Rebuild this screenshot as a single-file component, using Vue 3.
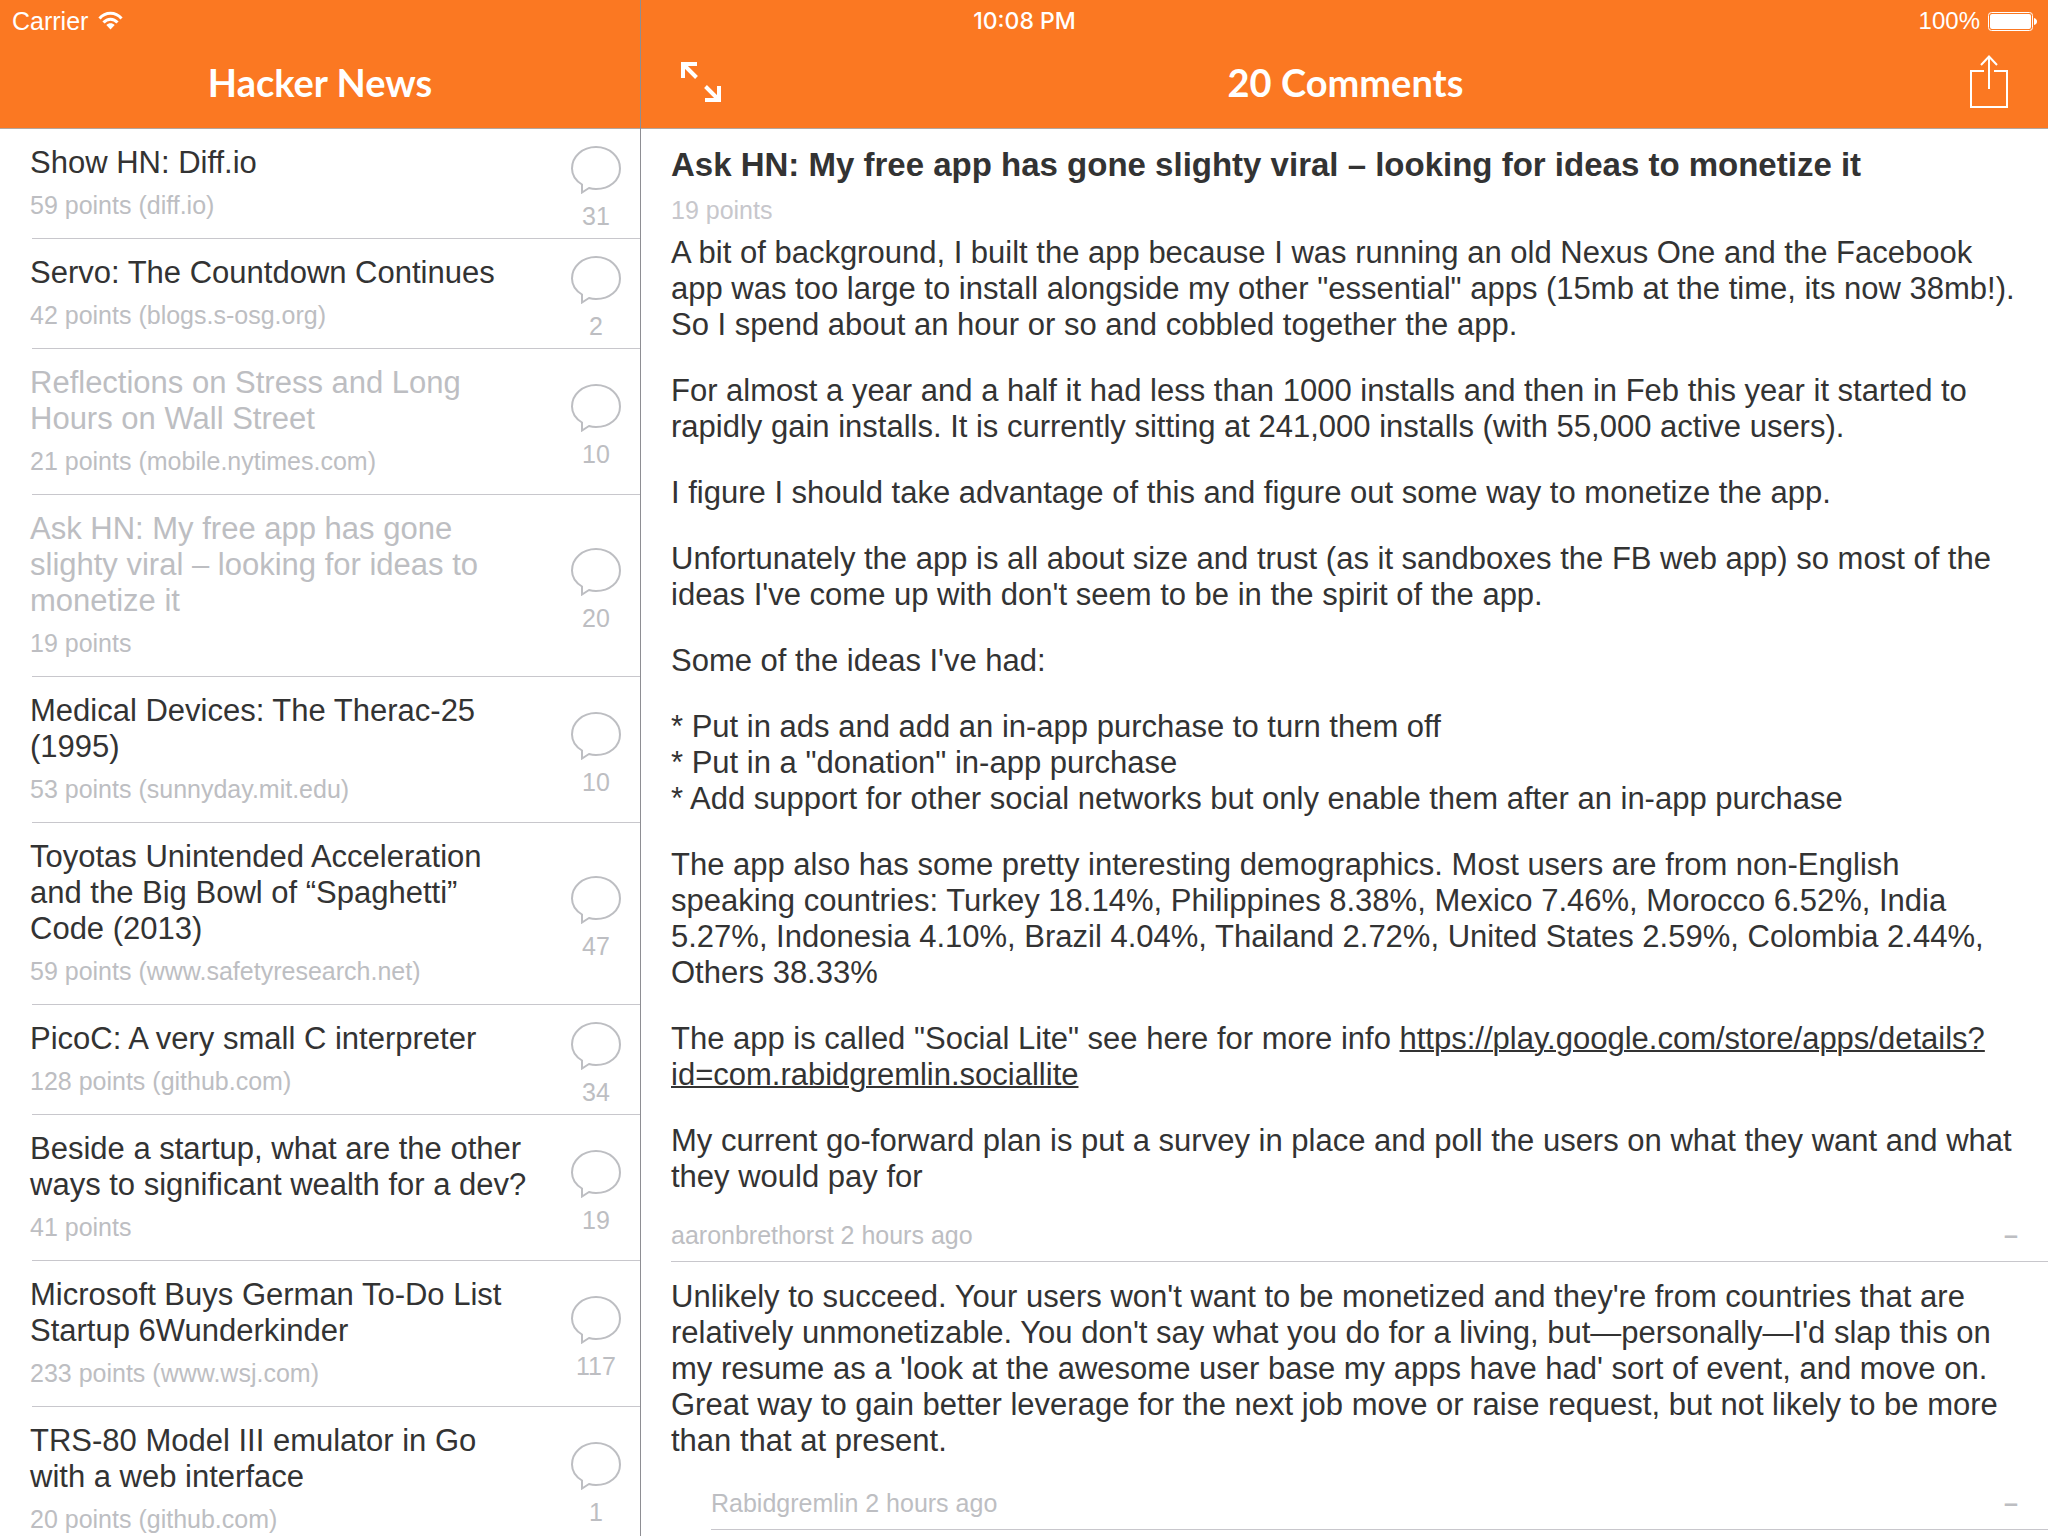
<script setup>
const stories = [
  { title: 'Show HN: Diff.io', meta: '59 points (diff.io)', comments: 31 },
  { title: 'Servo: The Countdown Continues', meta: '42 points (blogs.s-osg.org)', comments: 2 },
  { title: 'Reflections on Stress and Long\nHours on Wall Street', meta: '21 points (mobile.nytimes.com)', comments: 10, read: true },
  { title: 'Ask HN: My free app has gone\nslighty viral – looking for ideas to\nmonetize it', meta: '19 points', comments: 20, read: true },
  { title: 'Medical Devices: The Therac-25\n(1995)', meta: '53 points (sunnyday.mit.edu)', comments: 10 },
  { title: 'Toyotas Unintended Acceleration\nand the Big Bowl of “Spaghetti”\nCode (2013)', meta: '59 points (www.safetyresearch.net)', comments: 47 },
  { title: 'PicoC: A very small C interpreter', meta: '128 points (github.com)', comments: 34 },
  { title: 'Beside a startup, what are the other\nways to significant wealth for a dev?', meta: '41 points', comments: 19 },
  { title: 'Microsoft Buys German To-Do List\nStartup 6Wunderkinder', meta: '233 points (www.wsj.com)', comments: 117 },
  { title: 'TRS-80 Model III emulator in Go\nwith a web interface', meta: '20 points (github.com)', comments: 1 },
]

const paragraphs = [
  'A bit of background, I built the app because I was running an old Nexus One and the Facebook\napp was too large to install alongside my other "essential" apps (15mb at the time, its now 38mb!).\nSo I spend about an hour or so and cobbled together the app.',
  'For almost a year and a half it had less than 1000 installs and then in Feb this year it started to\nrapidly gain installs. It is currently sitting at 241,000 installs (with 55,000 active users).',
  'I figure I should take advantage of this and figure out some way to monetize the app.',
  "Unfortunately the app is all about size and trust (as it sandboxes the FB web app) so most of the\nideas I've come up with don't seem to be in the spirit of the app.",
  "Some of the ideas I've had:",
  '* Put in ads and add an in-app purchase to turn them off\n* Put in a "donation" in-app purchase\n* Add support for other social networks but only enable them after an in-app purchase',
  'The app also has some pretty interesting demographics. Most users are from non-English\nspeaking countries: Turkey 18.14%, Philippines 8.38%, Mexico 7.46%, Morocco 6.52%, India\n5.27%, Indonesia 4.10%, Brazil 4.04%, Thailand 2.72%, United States 2.59%, Colombia 2.44%,\nOthers 38.33%',
]

const comments = [
  {
    author: 'aaronbrethorst',
    age: '2 hours ago',
    depth: 0,
    text: "Unlikely to succeed. Your users won't want to be monetized and they're from countries that are\nrelatively unmonetizable. You don't say what you do for a living, but—personally—I'd slap this on\nmy resume as a 'look at the awesome user base my apps have had' sort of event, and move on.\nGreat way to gain better leverage for the next job move or raise request, but not likely to be more\nthan that at present.",
  },
  { author: 'Rabidgremlin', age: '2 hours ago', depth: 1, text: '' },
]
</script>

<template>
  <div class="app">
    <div class="status">
      <div class="carrier">
        <span>Carrier</span>
        <svg class="wifi" width="25" height="20" viewBox="0 0 25 20" aria-label="Wi-Fi">
          <g fill="none" stroke="#fff" stroke-width="3">
            <path d="M1.5 7.5C7.500 .6 17.500 .6 23.500 7.500" />
            <path d="M5.500 11.600C9.500 7.200 15.500 7.200 19.500 11.600" />
          </g>
          <path d="M8.300 14C10.800 11.600 14.200 11.600 16.700 14L12.500 18.500Z" fill="#fff" />
        </svg>
      </div>
      <time class="clock">10:08 PM</time>
      <div class="power">
        <span>100%</span>
        <svg width="49" height="19" viewBox="0 0 49 19" aria-label="Battery full">
          <rect x=".5" y=".5" width="44" height="18" rx="3" fill="none" stroke="#fff" />
          <rect x="2" y="2" width="41" height="15" rx="2" fill="#fff" />
          <path d="M46 6Q49 7 49 9.500Q49 12 46 13Z" fill="#fff" />
        </svg>
      </div>
    </div>

    <aside class="sidebar">
      <header class="bar">
        <h1>Hacker News</h1>
      </header>
      <ul class="stories">
        <li v-for="story in stories" :key="story.title" class="story" :class="{ read: story.read }">
          <div class="info">
            <h2>{{ story.title }}</h2>
            <p>{{ story.meta }}</p>
          </div>
          <div class="count">
            <svg width="50" height="48" viewBox="0 0 50 48" aria-hidden="true">
              <path d="M11 38.500C4.500 34.500 1 28.500 1 22.500C1 10.500 11.500 1 25 1S49 10.500 49 22.500S38.500 43 25 43C22.500 43 20.200 42.700 18 42L11 46.500Z" fill="none" stroke="#bdbec2" stroke-width="2" />
            </svg>
            <span>{{ story.comments }}</span>
          </div>
        </li>
      </ul>
    </aside>

    <main class="detail">
      <header class="bar actions">
        <button type="button" aria-label="Full screen">
          <svg width="40" height="40" viewBox="0 0 40 40">
            <g fill="none" stroke="#fff" stroke-width="4">
              <path d="M2 16V2H16M3 3L15.500 15.500" />
              <path d="M24 38H38V24M37 37L24.500 24.500" />
            </g>
          </svg>
        </button>
        <h1>20 Comments</h1>
        <button type="button" aria-label="Share">
          <svg width="38" height="54" viewBox="0 0 38 54">
            <path d="M14 16H1V52H37V16H24M19 34V2M11 10L19 1.500L27 10" fill="none" stroke="#fff" stroke-width="2" />
          </svg>
        </button>
      </header>
      <article class="post">
        <h2>Ask HN: My free app has gone slighty viral – looking for ideas to monetize it</h2>
        <p class="points">19 points</p>
        <div class="text">
          <p v-for="paragraph in paragraphs" :key="paragraph">{{ paragraph }}</p>
          <p>The app is called "Social Lite" see here for more info <a href="https://play.google.com/store/apps/details?id=com.rabidgremlin.sociallite">https://play.google.com/store/apps/details?<br>id=com.rabidgremlin.sociallite</a></p>
          <p>My current go-forward plan is put a survey in place and poll the users on what they want and what<br>they would pay for</p>
        </div>
      </article>
      <section v-for="comment in comments" :key="comment.author" class="comment" :class="{ reply: comment.depth }">
        <header>
          <span>{{ comment.author }} {{ comment.age }}</span>
          <button type="button" aria-label="Collapse">–</button>
        </header>
        <p>{{ comment.text }}</p>
      </section>
    </main>
  </div>
</template>

<style>
body {
  margin: 0;
  overflow: hidden;
}
</style>

<style scoped>
.app {
  position: relative;
  display: flex;
  height: 100vh;
  overflow: hidden;
  background: #fff;
  color: #333;
  font-family: "Liberation Sans", Arial, sans-serif;
  font-size: 31px;
  line-height: 36px;
}

h1,
h2,
p,
ul {
  margin: 0;
  padding: 0;
}

button {
  display: flex;
  padding: 0;
  border: 0;
  background: none;
  color: inherit;
  font: inherit;
  cursor: pointer;
}

.status {
  position: absolute;
  inset: 0 0 auto;
  display: grid;
  grid-template-columns: 1fr auto 1fr;
  align-items: center;
  height: 42px;
  padding: 0 11px 0 12px;
  color: #fff;
  font-size: 24px;
}

.carrier,
.power {
  display: flex;
  align-items: center;
  gap: 10px;
}

.carrier {
  font-size: 25px;
}

.power {
  justify-content: flex-end;
  gap: 8px;
}

.clock {
  font-family: Inter, sans-serif;
  font-size: 23px;
  font-weight: 500;
}

.sidebar {
  flex: 0 0 640px;
  border-right: 1px solid #8e8e93;
}

.bar {
  display: flex;
  justify-content: center;
  height: 84px;
  padding-top: 40px;
  padding-bottom: 4px;
  border-bottom: 1px solid #b2a69e;
  background: #fb7822;
  color: #fff;
}

.bar h1 {
  font-family: Lato, sans-serif;
  font-size: 38px;
  font-weight: 700;
  line-height: 84px;
}

.stories {
  list-style: none;
}

.story {
  display: flex;
  justify-content: space-between;
  margin-left: 32px;
  padding-right: 18px;
  border-bottom: 1px solid #c8c7cc;
}

.info {
  margin-left: -2px;
  padding: 16px 0 15px;
}

.info h2 {
  font-size: 31px;
  font-weight: 400;
  white-space: pre;
}

.info p {
  margin-top: 6px;
  color: #bdbec2;
  font-size: 25px;
}

.read h2 {
  color: #bdbec2;
}

.count {
  display: flex;
  flex-direction: column;
  align-items: center;
  justify-content: center;
  gap: 6px;
  width: 52px;
  padding-top: 10px;
  color: #bdbec2;
  font-size: 25px;
  line-height: 32px;
}

.detail {
  flex: 1;
  min-width: 0;
}

.actions {
  align-items: center;
  justify-content: space-between;
  padding-right: 40px;
  padding-left: 40px;
}

.post {
  padding: 18px 0 0 30px;
}

.post h2 {
  font-size: 33px;
  font-weight: 700;
}

.points {
  margin: 9px 0 7px;
  color: #c7c7cc;
  font-size: 25px;
}

.text p {
  margin-bottom: 30px;
  white-space: pre;
}

.text p:last-child {
  margin-bottom: 22px;
}

.text a {
  color: inherit;
  text-decoration: underline;
  text-decoration-thickness: 2px;
}

.comment {
  margin-left: 30px;
}

.reply {
  margin-left: 70px;
}

.comment header {
  display: flex;
  justify-content: space-between;
  padding: 0 30px 8px 0;
  border-bottom: 1px solid #c8c7cc;
  color: #bdbec2;
  font-size: 25px;
}

.comment header button {
  font-weight: 700;
}

.comment p {
  padding: 17px 0 26px;
  white-space: pre;
}
</style>
